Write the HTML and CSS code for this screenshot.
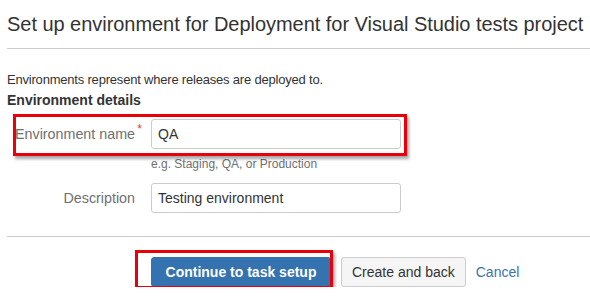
FILE: index.html
```html
<!DOCTYPE html>
<html>
<head>
    <title>Set up environment</title>
    <link rel="stylesheet" href="styles.css">
</head>
<body>
    <div class="page">
        <h1 class="title">Set up environment for Deployment for Visual Studio tests project</h1>
        <form class="env-form">
            <p class="intro">Environments represent where releases are deployed to.</p>
            <h3 class="section">Environment details</h3>
            <div class="field">
                <label for="envName" class="field-label">Environment name<span class="req">*</span></label>
                <div class="field-body">
                    <input type="text" id="envName" class="text" value="QA">
                    <div class="hint">e.g. Staging, QA, or Production</div>
                </div>
                <div class="mark mark-name"></div>
            </div>
            <div class="field">
                <label for="envDesc" class="field-label">Description</label>
                <div class="field-body">
                    <input type="text" id="envDesc" class="text" value="Testing environment">
                </div>
            </div>
            <div class="buttons">
                <button type="button" class="btn btn-primary">Continue to task setup</button>
                <button type="button" class="btn">Create and back</button>
                <a href="#" class="cancel">Cancel</a>
                <div class="mark mark-continue"></div>
            </div>
        </form>
    </div>
</body>
</html>
```

FILE: styles.css
```css
body {
    margin: 0;
    font-family: "Liberation Sans", Arial, sans-serif;
    color: #333;
    background-color: #fff;
}
.page {
    padding: 12px 0 0 7px;
}
.title {
    margin: 0;
    font-size: 20px;
    line-height: 25px;
    letter-spacing: -0.04px;
    font-weight: normal;
    color: #333;
    padding-bottom: 11px;
    border-bottom: 1px solid #ccc;
    white-space: nowrap;
}
.intro {
    margin: 21px 0 0;
    font-size: 13px;
    line-height: 20px;
    letter-spacing: -0.2px;
}
.section {
    margin: 0;
    font-size: 14px;
    line-height: 20px;
    font-weight: bold;
}
.field {
    position: relative;
    display: flex;
    align-items: flex-start;
    margin-top: 9px;
}
.field + .field {
    margin-top: 11px;
}
.field-label {
    position: relative;
    width: 128px;
    text-align: right;
    font-size: 14.3px;
    line-height: 30px;
    color: #707070;
    padding-right: 16px;
}
.req {
    position: absolute;
    right: 9px;
    top: -5px;
    color: #d04437;
    font-size: 12px;
}
.text {
    box-sizing: border-box;
    width: 250px;
    height: 30px;
    padding: 4px 6px;
    border: 1px solid #ccc;
    border-radius: 3px;
    font-family: "Liberation Sans", Arial, sans-serif;
    font-size: 14px;
    color: #333;
    margin: 0;
}
.hint {
    font-size: 12px;
    line-height: 16px;
    margin-top: 7px;
    color: #707070;
}
.buttons {
    position: relative;
    display: flex;
    align-items: center;
    margin-top: 23px;
    padding: 20px 0 0 144px;
    border-top: 1px solid #ccc;
}
.btn {
    box-sizing: border-box;
    height: 30px;
    padding: 0 10px;
    margin-right: 10px;
    border: 1px solid #ccc;
    border-radius: 3px;
    background-color: #f5f5f5;
    color: #333;
    font-family: "Liberation Sans", Arial, sans-serif;
    font-size: 14px;
    cursor: pointer;
}
.btn-primary {
    width: 180px;
    background-color: #3572b0;
    border-color: #3572b0;
    color: #fff;
    font-weight: bold;
}
.cancel {
    color: #3b73af;
    text-decoration: none;
    font-size: 14px;
}
.mark {
    position: absolute;
    border: 3px solid #e8000b;
    box-shadow: 2px 3px 3px rgba(0, 0, 0, 0.35);
}
.mark-name {
    left: 6px;
    top: -5px;
    width: 388px;
    height: 36px;
}
.mark-continue {
    left: 128px;
    top: 13px;
    width: 192px;
    height: 33px;
}
```
